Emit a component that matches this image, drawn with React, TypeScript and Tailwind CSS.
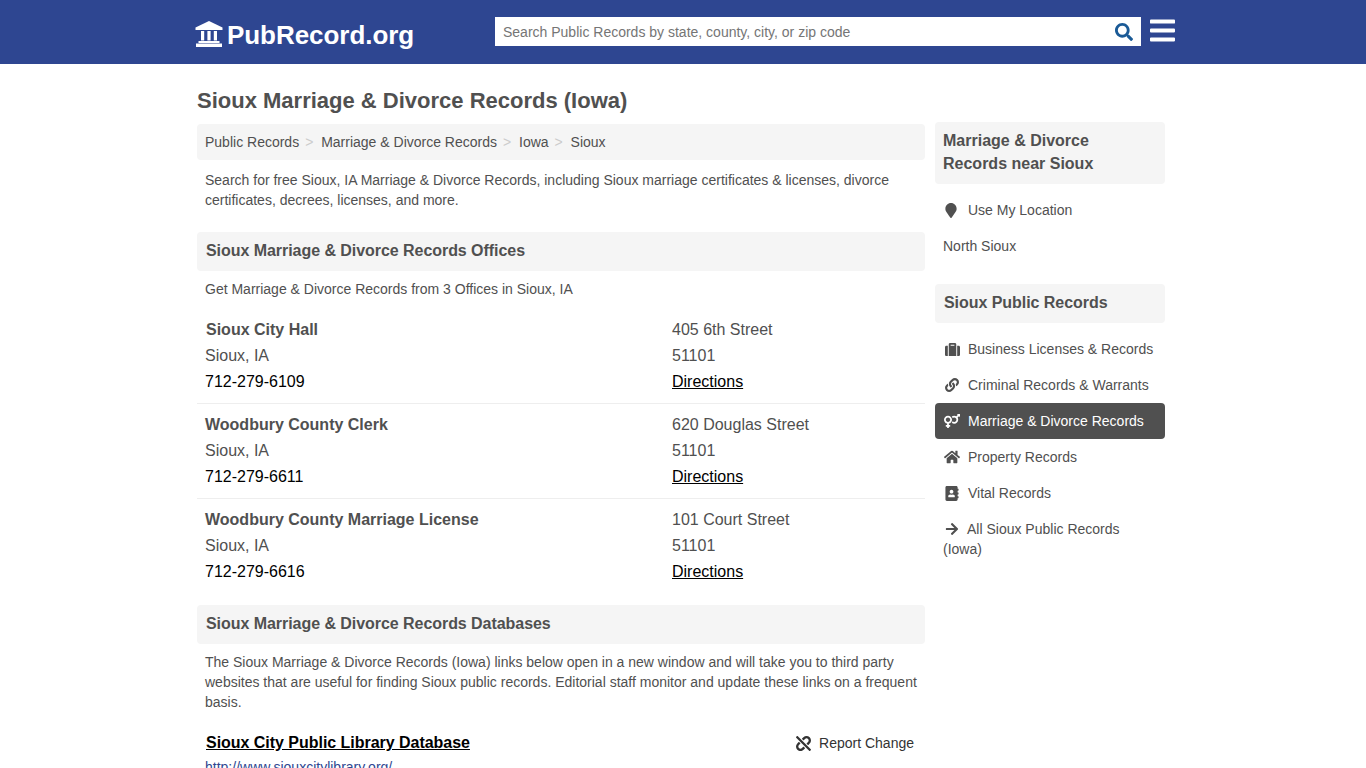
import { FaSearch, FaBars, FaMapMarker, FaSuitcase, FaLink, FaVenusMars, FaHome, FaAddressBook, FaArrowRight, FaUnlink } from "react-icons/fa";

const offices = [
  { name: "Sioux City Hall", nameCls: "pl-px", addr: "405 6th Street", phone: "712-279-6109" },
  { name: "Woodbury County Clerk", nameCls: "", addr: "620 Douglas Street", phone: "712-279-6611" },
  { name: "Woodbury County Marriage License", nameCls: "", addr: "101 Court Street", phone: "712-279-6616" },
];

const links = [
  { label: "Business Licenses & Records", Icon: FaSuitcase, size: "w-[15px] h-[15px]" },
  { label: "Criminal Records & Warrants", Icon: FaLink, size: "w-[14px] h-[14px]" },
  { label: "Marriage & Divorce Records", Icon: FaVenusMars, size: "w-[16px] h-[16px]", active: true },
  { label: "Property Records", Icon: FaHome, size: "w-[16px] h-[16px]" },
  { label: "Vital Records", Icon: FaAddressBook, size: "w-[14px] h-[15px]" },
];

function Logo() {
  return (
    <svg viewBox="0 0 28 26" className="w-[28px] h-[26px] shrink-0" fill="currentColor">
      <path d="M14 0 27.5 6.6V9H.5V6.6Z" />
      <rect x="6" y="10" width="3.2" height="9.5" />
      <rect x="12.4" y="10" width="3.2" height="9.5" />
      <rect x="18.8" y="10" width="3.2" height="9.5" />
      <rect x="3.5" y="20" width="21" height="2" />
      <rect x="1" y="22.5" width="26" height="3.5" />
    </svg>
  );
}

export default function App() {
  return (
    <div className="h-[768px] overflow-hidden bg-white text-[#505050] font-['Liberation_Sans',Arial,sans-serif] text-[14px] leading-[20px]">
      <header className="h-16 bg-[#2e4691]">
        <div className="w-[980px] ml-[195px] h-full flex items-start">
          <div className="w-[300px] flex items-start text-white pt-[17px]">
            <span className="mt-[4px]"><Logo /></span>
            <span className="ml-[4px] text-[26px] leading-[36px] font-bold whitespace-nowrap tracking-[-0.05px]">PubRecord.org</span>
          </div>
          <div className="mt-[17px] w-[646px] h-[29px] bg-white flex items-center justify-between pl-[8px] pr-[8px]">
            <span className="text-[#757575]">Search Public Records by state, county, city, or zip code</span>
            <FaSearch className="w-[18px] h-[18px] text-[#1a5a96]" />
          </div>
          <FaBars className="ml-[9px] mt-[16px] w-[25px] h-[29px] text-white" />
        </div>
      </header>

      <main className="w-[968px] ml-[197px]">
        <h1 className="pt-[23px] text-[22px] leading-[27px] font-bold">Sioux Marriage &amp; Divorce Records (Iowa)</h1>
        <div className="flex gap-[10px]">
          <div className="w-[728px] shrink-0">
            <nav className="mt-[10px] h-[36px] bg-[#f5f5f5] rounded-[4px] flex items-center pl-[8px]">
              <span>Public Records</span>
              <span className="w-[22px] pl-[6px] text-[#cccccc]">&gt;</span>
              <span>Marriage &amp; Divorce Records</span>
              <span className="w-[22px] pl-[6px] text-[#cccccc]">&gt;</span>
              <span>Iowa</span>
              <span className="w-[22px] pl-[6px] text-[#cccccc]">&gt;</span>
              <span>Sioux</span>
            </nav>
            <p className="mt-[10px] px-[8px]">
              Search for free Sioux, IA Marriage &amp; Divorce Records, including Sioux marriage certificates &amp; licenses, divorce certificates, decrees, licenses, and more.
            </p>
            <h2 className="mt-[22px] h-[39px] bg-[#f5f5f5] rounded-[4px] pl-[9px] text-[16px] leading-[37px] font-bold tracking-[-0.05px]">Sioux Marriage &amp; Divorce Records Offices</h2>
            <p className="mt-[8px] px-[8px]">Get Marriage &amp; Divorce Records from 3 Offices in Sioux, IA</p>
            <div className="mt-[10px]">
              {offices.map((o, i) => (
                <div key={o.name} className={`flex h-[95px] pl-[8px] pt-[8px] text-[16px] leading-[26px] ${i < 2 ? "border-b border-[#eeeeee]" : ""}`}>
                  <div className="w-[467px]">
                    <div className={`font-bold ${o.nameCls}`}>{o.name}</div>
                    <div>Sioux, IA</div>
                    <div className="text-black">{o.phone}</div>
                  </div>
                  <div>
                    <div>{o.addr}</div>
                    <div>51101</div>
                    <a className="text-black underline">Directions</a>
                  </div>
                </div>
              ))}
            </div>
            <h2 className="mt-[11px] h-[39px] bg-[#f5f5f5] rounded-[4px] pl-[9px] text-[16px] leading-[37px] font-bold tracking-[-0.05px]">Sioux Marriage &amp; Divorce Records Databases</h2>
            <p className="mt-[8px] px-[8px]">
              The Sioux Marriage &amp; Divorce Records (Iowa) links below open in a new window and will take you to third party websites that are useful for finding Sioux public records. Editorial staff monitor and update these links on a frequent basis.
            </p>
            <div className="mt-[18px] pl-[9px] pr-[11px] flex items-center justify-between h-[26px]">
              <a className="text-[16px] font-bold text-black underline tracking-[-0.03px]">Sioux City Public Library Database</a>
              <span className="flex items-center text-[#333333]">
                <FaUnlink className="w-[15px] h-[15px] mr-[8px]" />
                Report Change
              </span>
            </div>
            <div className="mt-[1px] pl-[8px] text-[#2e4691] underline leading-[20px]">http://www.siouxcitylibrary.org/</div>
          </div>

          <aside className="w-[230px] shrink-0">
            <div className="mt-[8px] h-[62px] bg-[#f5f5f5] rounded-[4px] pl-[8px] pt-[7px] text-[16px] leading-[23px] font-bold">
              Marriage &amp; Divorce<br />Records near Sioux
            </div>
            <div className="mt-[8px] h-[36px] pl-[10px] flex items-center">
              <FaMapMarker className="w-[12px] h-[15px]" />
              <span className="ml-[11px]">Use My Location</span>
            </div>
            <div className="h-[36px] pl-[8px] flex items-center">North Sioux</div>
            <div className="mt-[20px] h-[39px] bg-[#f5f5f5] rounded-[4px] pl-[9px] text-[16px] leading-[37px] font-bold tracking-[-0.05px]">Sioux Public Records</div>
            <div className="mt-[8px]">
              {links.map(({ label, Icon, size, active }) => (
                <div key={label} className={`h-[36px] pl-[10px] flex items-center rounded-[4px] ${active ? "bg-[#505050] text-white" : ""}`}>
                  <span className="w-[14px] flex justify-center"><Icon className={`${size} shrink-0`} /></span>
                  <span className="ml-[9px] whitespace-nowrap">{label}</span>
                </div>
              ))}
              <div className="pl-[8px] pr-[8px] pt-[8px]">
                <FaArrowRight className="inline-block w-[14px] h-[14px] mr-[8px] ml-[2px] align-[-2px]" />
                All Sioux Public Records (Iowa)
              </div>
            </div>
          </aside>
        </div>
      </main>
    </div>
  );
}
